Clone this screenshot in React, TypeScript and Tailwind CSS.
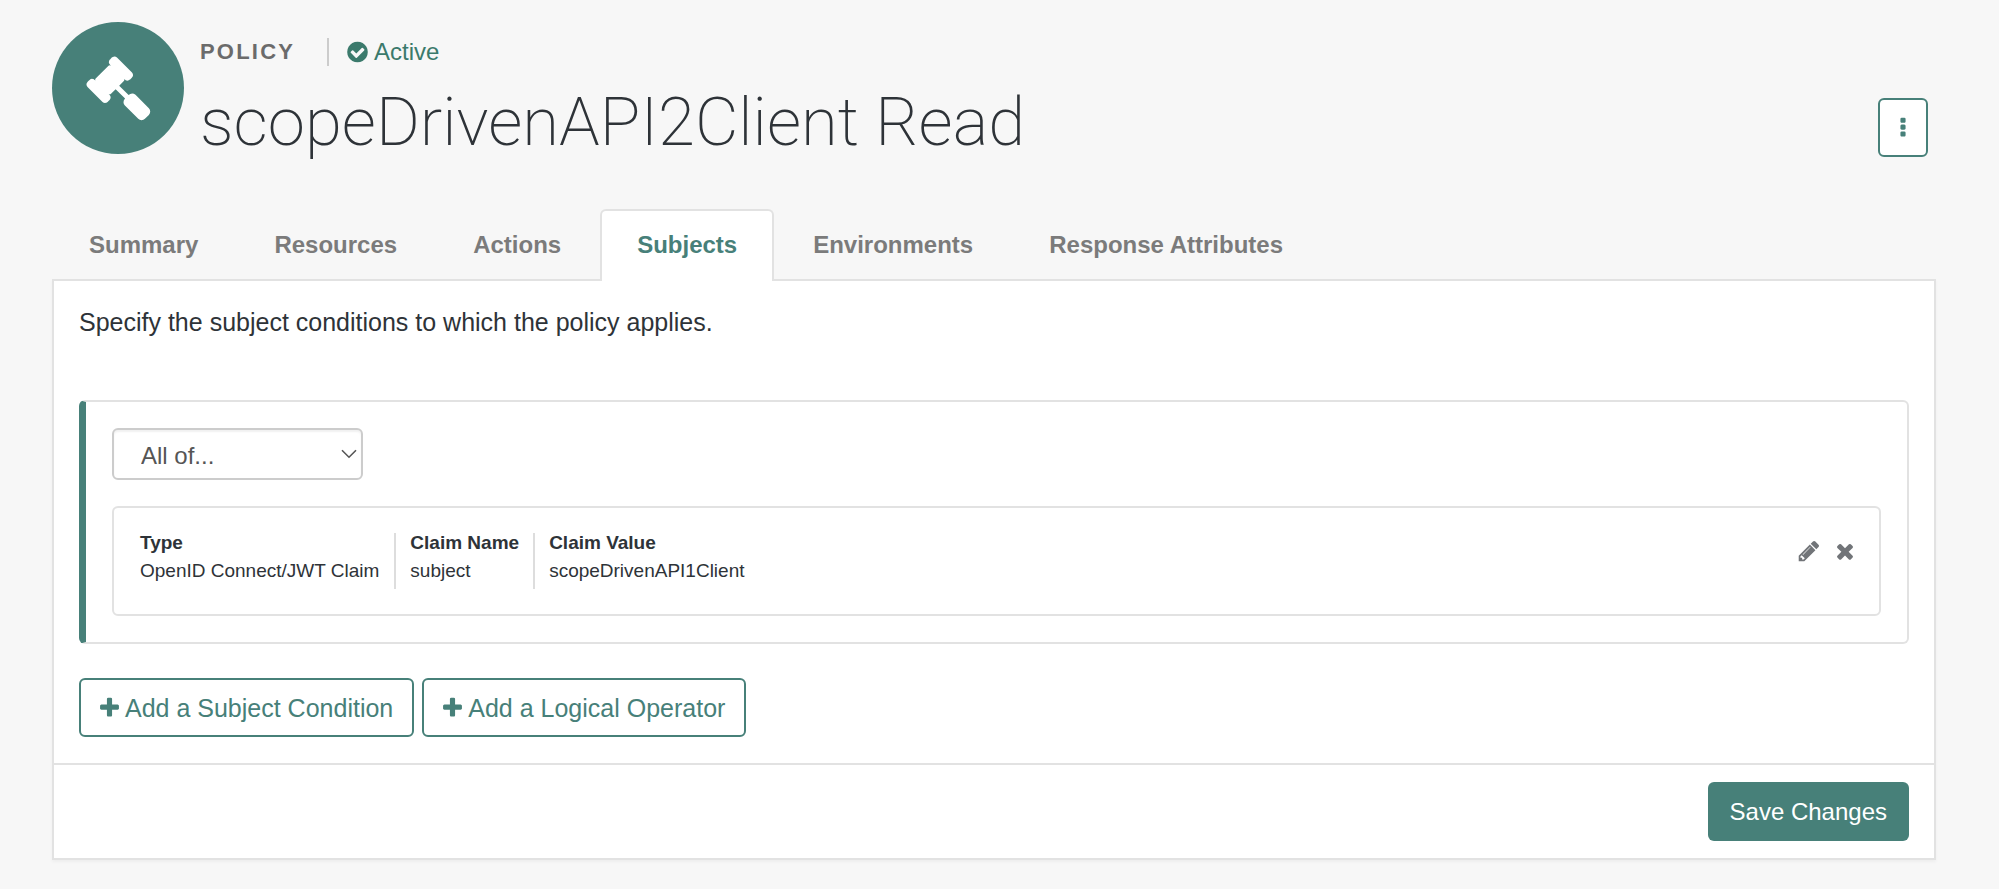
import React from "react";

type IconProps = { d: string; viewBox?: string; className?: string };

function Icon({ d, viewBox = "0 0 1792 1792", className }: IconProps) {
  return (
    <svg viewBox={viewBox} className={className} fill="currentColor" aria-hidden="true">
      <path d={d} />
    </svg>
  );
}

const GAVEL =
  "M1771 1536q0 53-37 90l-107 108q-39 37-91 37-53 0-90-37l-363-364q-38-36-38-90 0-53 43-96l-256-256-126 126q-14 14-34 14t-34-14q2 2 12.5 12t12.5 13 10 11.5 10 13.5 6 13.5 5.5 16.5 1.5 18q0 38-28 68-3 3-16.5 18t-19 20.5-18.5 16.5-22 15.5-22 9-26 4.5q-40 0-68-28l-408-408q-28-28-28-68 0-13 4.5-26t9-22 15.5-22 16.5-18.5 20.5-19 18-16.5q30-28 68-28 10 0 18 1.5t16.5 5.5 13.5 6 13.5 10 11.5 10 13 12.5 12 12.5q-14-14-14-34t14-34l348-348q14-14 34-14t34 14q-2-2-12.5-12t-12.5-13-10-11.5-10-13.5-6-13.5-5.5-16.5-1.5-18q0-38 28-68 3-3 16.5-18t19-20.5 18.5-16.5 22-15.5 22-9 26-4.5q40 0 68 28l408 408q28 28 28 68 0 13-4.5 26t-9 22-15.5 22-16.5 18.5-20.5 19-18 16.5q-30 28-68 28-10 0-18-1.5t-16.5-5.5-13.5-6-13.5-10-11.5-10-13-12.5-12-12.5q14 14 14 34t-14 34l-126 126 256 256q43-43 96-43 52 0 91 37l363 363q37 39 37 91z";
const PENCIL =
  "M491 1536l91-91-235-235-91 91v107h128v128h107zm523-928q0-22-22-22-10 0-17 7l-542 542q-7 7-7 17 0 22 22 22 10 0 17-7l542-542q7-7 7-17zm-54-192l416 416-832 832h-416v-416zm683 96q0 53-37 90l-166 166-416-416 166-165q36-38 90-38 53 0 91 38l235 234q37 39 37 91z";
const TIMES =
  "M1490 1322q0 40-28 68l-136 136q-28 28-68 28t-68-28l-294-294-294 294q-28 28-68 28t-68-28l-136-136q-28-28-28-68t28-68l294-294-294-294q-28-28-28-68t28-68l136-136q28-28 68-28t68 28l294 294 294-294q28-28 68-28t68 28l136 136q28 28 28 68t-28 68l-294 294 294 294q28 28 28 68z";
const PLUS =
  "M1600 736v192q0 40-28 68t-68 28h-416v416q0 40-28 68t-68 28h-192q-40 0-68-28t-28-68v-416h-416q-40 0-68-28t-28-68v-192q0-40 28-68t68-28h416v-416q0-40 28-68t68-28h192q40 0 68 28t28 68v416h416q40 0 68 28t28 68z";
const CHECK =
  "M1412 734q0-28-18-46l-91-90q-19-19-45-19t-45 19l-408 407-226-226q-19-19-45-19t-45 19l-91 90q-18 18-18 46 0 27 18 45l362 362q19 19 45 19 27 0 46-19l543-543q18-18 18-45zm252 162q0 209-103 385.5t-279.5 279.5-385.5 103-385.5-103-279.5-279.5-103-385.5 103-385.5 279.5-279.5 385.5-103 385.5 103 279.5 279.5 103 385.5z";
const DOTS =
  "M1088 1248v192q0 40-28 68t-68 28h-192q-40 0-68-28t-28-68v-192q0-40 28-68t68-28h192q40 0 68 28t28 68zm0-512v192q0 40-28 68t-68 28h-192q-40 0-68-28t-28-68v-192q0-40 28-68t68-28h192q40 0 68 28t28 68zm0-512v192q0 40-28 68t-68 28h-192q-40 0-68-28t-28-68v-192q0-40 28-68t68-28h192q40 0 68 28t28 68z";

const TABS = ["Summary", "Resources", "Actions", "Subjects", "Environments", "Response Attributes"];

const FIELDS = [
  { label: "Type", value: "OpenID Connect/JWT Claim" },
  { label: "Claim Name", value: "subject" },
  { label: "Claim Value", value: "scopeDrivenAPI1Client" },
];

function AddButton({ children }: { children: React.ReactNode }) {
  return (
    <button
      type="button"
      className="flex h-[59px] items-center gap-1.5 rounded-md border-2 border-[#478079] bg-white px-[19px] text-[25px] text-[#478079]"
    >
      <Icon d={PLUS} viewBox="192 0 1408 1792" className="h-6 w-[19px]" />
      {children}
    </button>
  );
}

export default function App() {
  return (
    <div className="min-h-screen bg-[#f7f7f7] pt-[22px] pr-[63px] pb-6 pl-[52px] font-['Liberation_Sans',Arial,sans-serif] text-2xl leading-8 text-[#2e3338]">
      <header className="flex items-start">
        <div className="flex size-[132px] shrink-0 items-center justify-center rounded-full bg-[#478079] text-white">
          <Icon d={GAVEL} className="size-[66px]" />
        </div>
        <div className="ml-4 flex-1">
          <div className="flex items-center pt-3.5">
            <span className="text-[22px] font-bold tracking-widest text-[#6b6b6b]">POLICY</span>
            <span className="ml-8 h-7 w-0.5 bg-[#cccccc]" />
            <span className="ml-[18px] flex items-center gap-1.5 text-[#3b7a6c]">
              <Icon d={CHECK} viewBox="128 0 1536 1792" className="h-6 w-[21px]" />
              Active
            </span>
          </div>
          <h1 className="mt-3.5 font-[Roboto,sans-serif] text-[67px] leading-[80px] font-extralight">
            scopeDrivenAPI2Client Read
          </h1>
        </div>
        <button
          type="button"
          aria-label="More actions"
          className="mt-[76px] mr-2 flex h-[59px] w-[50px] items-center justify-center rounded-md border-2 border-[#478079] bg-white text-[#478079]"
        >
          <Icon d={DOTS} className="size-6" />
        </button>
      </header>

      <nav className="mt-[47px] flex gap-0.5 font-bold">
        {TABS.map((tab) => (
          <a
            key={tab}
            href={"#" + tab.toLowerCase().replace(" ", "-")}
            className={
              tab === "Subjects"
                ? "relative z-10 -mb-0.5 rounded-t-md border-2 border-b-0 border-[#e2e2e2] bg-white px-[35px] pt-[18px] pb-5 text-[#478079]"
                : "border-2 border-b-0 border-transparent px-[35px] pt-[18px] pb-[18px] text-[#7b7b7b]"
            }
          >
            {tab}
          </a>
        ))}
      </nav>

      <main className="border-2 border-[#e2e2e2] bg-white shadow-[0_2px_3px_rgba(0,0,0,0.04)]">
        <div className="px-[25px] pt-[25px] pb-[26px]">
          <p className="text-[25px]">Specify the subject conditions to which the policy applies.</p>

          <section className="mt-[62px] rounded-md border-2 border-l-[7px] border-[#e2e2e2] border-l-[#478079] p-[26px]">
            <div className="relative w-[251px]">
              <select
                aria-label="Logical operator"
                className="block h-[52px] w-full appearance-none rounded-md border-2 border-[#cccccc] bg-white pt-1 pr-10 pl-[27px] text-[#555555] shadow-[inset_0_2px_2px_rgba(0,0,0,0.06)]"
              >
                <option>All of...</option>
                <option>Any of...</option>
                <option>None of...</option>
              </select>
              <svg
                viewBox="0 0 16 10"
                className="pointer-events-none absolute top-[21px] right-[6px] h-2.5 w-4"
                fill="none"
                stroke="#555555"
                strokeWidth="1.6"
                aria-hidden="true"
              >
                <path d="M1 1.2L8 8.2L15 1.2" />
              </svg>
            </div>

            <div className="mt-[26px] flex items-start justify-between rounded-md border-2 border-[#e2e2e2] py-[25px] pr-[22px] pl-[26px]">
              <dl className="flex text-[19px]">
                {FIELDS.map((field, i) => (
                  <div
                    key={field.label}
                    className={i === 0 ? "pr-[15px]" : "border-l-2 border-[#dddddd] px-[14px]"}
                  >
                    <dt className="leading-5 font-bold">{field.label}</dt>
                    <dd className="leading-9">{field.value}</dd>
                  </div>
                ))}
              </dl>
              <div className="mt-1.5 flex gap-3 text-[#717478]">
                <button type="button" aria-label="Edit condition">
                  <Icon d={PENCIL} className="size-6" />
                </button>
                <button type="button" aria-label="Remove condition">
                  <Icon d={TIMES} className="size-6" />
                </button>
              </div>
            </div>
          </section>

          <div className="mt-[34px] flex gap-2">
            <AddButton>Add a Subject Condition</AddButton>
            <AddButton>Add a Logical Operator</AddButton>
          </div>
        </div>

        <footer className="flex justify-end border-t-2 border-[#e2e2e2] px-[25px] py-[17px]">
          <button type="button" className="h-[59px] rounded-md bg-[#478079] px-[22px] text-white">
            Save Changes
          </button>
        </footer>
      </main>
    </div>
  );
}
